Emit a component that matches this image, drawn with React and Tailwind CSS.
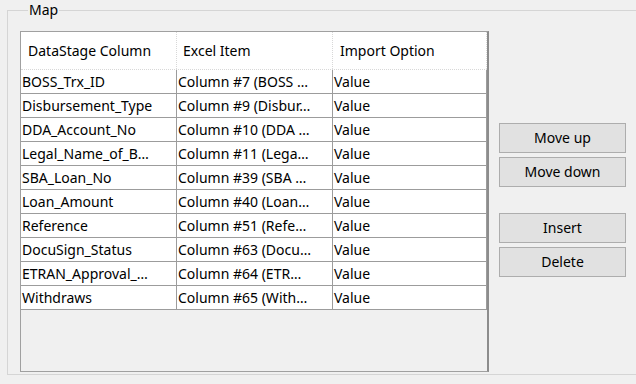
const rows = [
  ["BOSS_Trx_ID", "Column #7 (BOSS …", "Value"],
  ["Disbursement_Type", "Column #9 (Disbur…", "Value"],
  ["DDA_Account_No", "Column #10 (DDA …", "Value"],
  ["Legal_Name_of_B…", "Column #11 (Lega…", "Value"],
  ["SBA_Loan_No", "Column #39 (SBA …", "Value"],
  ["Loan_Amount", "Column #40 (Loan…", "Value"],
  ["Reference", "Column #51 (Refe…", "Value"],
  ["DocuSign_Status", "Column #63 (Docu…", "Value"],
  ["ETRAN_Approval_…", "Column #64 (ETR…", "Value"],
  ["Withdraws", "Column #65 (With…", "Value"],
];

function Btn({ children }) {
  return (
    <button className="h-[30px] w-[127px] border border-[#adadad] bg-[#e1e1e1] text-[14px] leading-none text-black">
      {children}
    </button>
  );
}

export default function App() {
  return (
    <div
      className="w-[636px] h-[384px] overflow-hidden bg-[#f0f0f0] pt-[2px] pl-[7px]"
      style={{ fontFamily: '"Noto Sans", "Segoe UI", sans-serif' }}
    >
      <fieldset className="w-[650px] h-[373px] border border-[#d5d5d5] pl-[12px] pt-[13px]">
        <legend className="ml-[8px] px-[1px] text-[14px] leading-[16px] text-black">Map</legend>

        <div className="flex items-start gap-[10px]">
          {/* Grid */}
          <div className="w-[469px] h-[341px] border-l border-t border-b border-[#a0a0a0] border-r-2 border-r-[#8c8c8c] bg-[#f0f0f0]">
            <div className="grid grid-cols-[156px_156px_154px] h-[38px] bg-white border-b border-dotted border-[#d8d8d8] text-[14px] text-black">
              <div className="flex items-center pl-[7px] border-r border-dotted border-[#d8d8d8]">DataStage Column</div>
              <div className="flex items-center pl-[6px] border-r border-dotted border-[#d8d8d8]">Excel Item</div>
              <div className="flex items-center pl-[7px] border-r border-dotted border-[#d8d8d8]">Import Option</div>
            </div>
            {rows.map((r) => (
              <div
                key={r[0]}
                className="grid grid-cols-[156px_156px_154px] h-[24px] bg-white border-b border-[#9c9c9c] text-[14px] text-black"
              >
                <div className="flex items-center pl-[1px] border-r border-[#9c9c9c] overflow-hidden whitespace-nowrap">{r[0]}</div>
                <div className="flex items-center pl-[1px] border-r border-[#9c9c9c] overflow-hidden whitespace-nowrap">{r[1]}</div>
                <div className="flex items-center pl-[1px] border-r border-[#9c9c9c] overflow-hidden whitespace-nowrap">{r[2]}</div>
              </div>
            ))}
          </div>

          {/* Buttons */}
          <div className="flex flex-col gap-[4px] pt-[92px]">
            <Btn>Move up</Btn>
            <Btn>Move down</Btn>
            <div className="h-[18px]" />
            <Btn>Insert</Btn>
            <Btn>Delete</Btn>
          </div>
        </div>
      </fieldset>
    </div>
  );
}
